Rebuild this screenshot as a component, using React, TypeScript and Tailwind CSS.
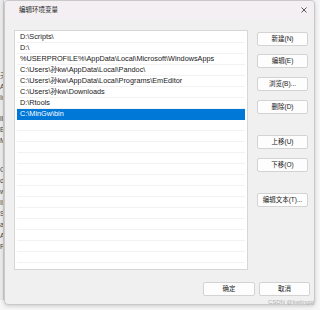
import React from "react";

const paths = [
  "D:\\Scripts\\",
  "D:\\",
  "%USERPROFILE%\\AppData\\Local\\Microsoft\\WindowsApps",
  "C:\\Users\\孙kw\\AppData\\Local\\Pandoc\\",
  "C:\\Users\\孙kw\\AppData\\Local\\Programs\\EmEditor",
  "C:\\Users\\孙kw\\Downloads",
  "D:\\Rtools",
  "C:\\MinGw\\bin",
];

const font = { fontFamily: '"Liberation Sans", "Noto Sans CJK SC", sans-serif' };

function SideButton({ label, className = "" }: { label: string; className?: string }) {
  return (
    <div
      className={`h-[14px] w-[51px] flex items-center justify-center rounded-[2px] border border-[#d3d3d3] bg-[#fdfdfd] text-[6.5px] text-[#222] ${className}`}
    >
      {label}
    </div>
  );
}

export default function App() {
  const rows = Array.from({ length: 22 }, (_, i) => paths[i] ?? "");
  const selected = 7;

  return (
    <div className="relative flex w-[320px] h-[310px] overflow-hidden bg-[#f6f6f6]" style={font}>
      {/* window behind the dialog */}
      <div className="w-[4px] h-[300px] bg-[#ebebeb] border-r border-[#cfcfcf] overflow-hidden flex flex-col text-[7px] text-[#444] leading-[11px] pt-[70px]">
        <span>无</span>
        <span>A</span>
        <span>Ir</span>
        <span className="mt-[10px]">ll</span>
        <span>E</span>
        <span>M</span>
        <span className="mt-[18px]">C</span>
        <span>c</span>
        <span>w</span>
        <span>IL</span>
        <span>S</span>
        <span>a</span>
        <span>A</span>
        <span>R</span>
      </div>

      {/* dialog */}
      <div className="flex flex-col w-[311px] h-[305px] bg-[#f0f0f0] rounded-[4px] border border-[#c9c9c9] shadow-[0_1px_4px_rgba(0,0,0,0.18)]">
        <div className="flex items-center justify-between h-[18px] bg-[#f3eff2] rounded-t-[4px] pl-[14px] pr-[7px]">
          <span className="text-[6.5px] text-[#222]">编辑环境变量</span>
          <svg width="6" height="6" viewBox="0 0 6 6" className="mb-[1px]">
            <path d="M0.5 0.5 L5.5 5.5 M5.5 0.5 L0.5 5.5" stroke="#333" strokeWidth="0.8" />
          </svg>
        </div>

        <div className="flex pt-[11px] pl-[9px]">
          <div className="w-[234px] h-[240px] bg-white border border-[#d6d6d6] overflow-hidden pt-[1px] px-[2px]">
            {rows.map((p, i) => (
              <div
                key={i}
                className={`h-[11px] flex items-center pl-[3px] text-[7.3px] whitespace-nowrap border-b ${
                  i === selected
                    ? "bg-[#0078d7] text-white border-[#0078d7]"
                    : "text-[#1a1a1a] border-[#f2f2f2]"
                }`}
              >
                {p}
              </div>
            ))}
          </div>

          <div className="flex flex-col ml-[9px] pt-[2px]">
            <SideButton label="新建(N)" />
            <SideButton label="编辑(E)" className="mt-[8px]" />
            <SideButton label="浏览(B)..." className="mt-[9px]" />
            <SideButton label="删除(D)" className="mt-[9px]" />
            <SideButton label="上移(U)" className="mt-[21px]" />
            <SideButton label="下移(O)" className="mt-[9px]" />
            <SideButton label="编辑文本(T)..." className="mt-[21px]" />
          </div>
        </div>

        <div className="flex justify-end gap-[4px] pr-[4px] pt-[12px]">
          <SideButton label="确定" className="w-[52px] border-[#3a7fd0]" />
          <SideButton label="取消" />
        </div>
      </div>

      <span className="absolute right-[6px] bottom-[3px] text-[6px] text-[#b0b0b0]">CSDN @kwlingqj</span>
    </div>
  );
}
